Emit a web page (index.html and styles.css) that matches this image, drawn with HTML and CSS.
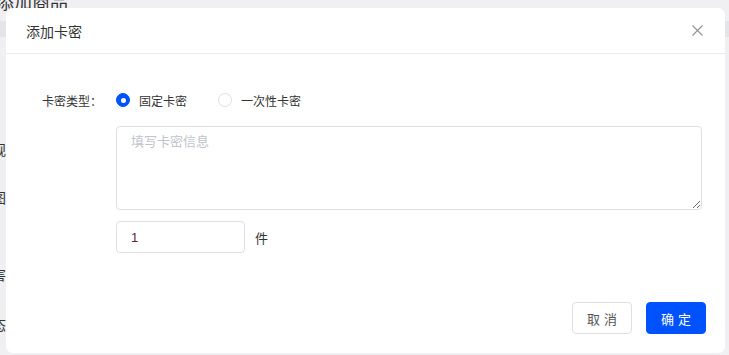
FILE: index.html
```html
<!DOCTYPE html>
<html lang="zh-CN">
<head>
    <meta charset="UTF-8">
    <meta name="viewport" content="width=device-width, initial-scale=1.0">
    <title>添加卡密</title>
    <link rel="stylesheet" href="styles.css">
</head>
<body>
    <div class="page">
        <h2 class="page-title">添加商品</h2>
        <div class="page-bar"></div>
        <div class="page-form">
            <div class="page-label l1">规</div>
            <div class="page-label l2">图</div>
            <div class="page-label l3">害</div>
            <div class="page-label l4">态</div>
        </div>
    </div>

    <div class="modal">
        <div class="modal-header">
            <span class="modal-title">添加卡密</span>
            <button class="modal-close" aria-label="关闭">
                <svg width="11" height="11" viewBox="0 0 11 11">
                    <path d="M0.5 0.5L10.5 10.5M10.5 0.5L0.5 10.5" stroke="#909399" stroke-width="1.1" fill="none"/>
                </svg>
            </button>
        </div>

        <div class="modal-body">
            <div class="form-row">
                <div class="form-label">卡密类型：</div>
                <div class="radio-group">
                    <label class="radio checked"><span class="radio-dot"></span>固定卡密</label>
                    <label class="radio"><span class="radio-dot"></span>一次性卡密</label>
                </div>
            </div>

            <div class="form-field">
                <textarea class="card-text" placeholder="填写卡密信息"></textarea>
            </div>

            <div class="form-field count-row">
                <input class="count-input" type="text" value="1">
                <span class="count-unit">件</span>
            </div>
        </div>

        <div class="modal-footer">
            <button class="btn">取消</button>
            <button class="btn btn-primary">确定</button>
        </div>
    </div>
</body>
</html>
```

FILE: styles.css
```css
body {
    margin: 0;
    background-color: #f0f0f2;
    font-family: "Liberation Sans", "Noto Sans CJK SC", sans-serif;
    color: #333;
    overflow: hidden;
    height: 355px;
}

.page {
    margin-left: -8px;
}

.page-title {
    margin: -9px 0 0 4px;
    font-size: 18px;
    font-weight: normal;
    line-height: 24px;
    color: #333;
}

.page-bar {
    height: 16px;
    margin-top: 6px;
    background-color: #e4e5e9;
}

.page-form {
    position: relative;
}

.page-label {
    position: absolute;
    left: 0;
    font-size: 14px;
    line-height: 16px;
    color: #333;
}

.l1 { top: 105px; }
.l2 { top: 153px; }
.l3 { top: 230px; }
.l4 { top: 280px; }

.modal {
    position: absolute;
    left: 6px;
    top: 8px;
    width: 719px;
    height: 345px;
    background-color: #fff;
    border-radius: 7px;
    display: flex;
    flex-direction: column;
}

.modal-header {
    height: 45px;
    padding: 0 22px 0 20px;
    border-bottom: 1px solid #ebebeb;
    display: flex;
    align-items: center;
    justify-content: space-between;
}

.modal-title {
    font-size: 14px;
    color: #333;
}

.modal-close {
    border: none;
    background: none;
    padding: 0;
    width: 11px;
    height: 11px;
    display: flex;
    cursor: pointer;
}

.modal-body {
    flex: 1;
    padding: 36px 24px 0 36px;
}

.form-row {
    display: flex;
    align-items: center;
    height: 20px;
}

.form-label {
    width: 74px;
    font-size: 12px;
    color: #333;
}

.radio-group {
    display: flex;
    gap: 31px;
}

.radio {
    display: flex;
    align-items: center;
    gap: 9px;
    font-size: 12px;
    color: #333;
    cursor: pointer;
}

.radio-dot {
    width: 12px;
    height: 12px;
    border: 1px solid #dcdfe6;
    border-radius: 50%;
    box-sizing: content-box;
    background-color: #fff;
    display: flex;
    align-items: center;
    justify-content: center;
}

.radio.checked .radio-dot {
    border-color: #0052ff;
    background-color: #0052ff;
}

.radio.checked .radio-dot::after {
    content: "";
    width: 5px;
    height: 5px;
    border-radius: 50%;
    background-color: #fff;
}

.form-field {
    margin-left: 74px;
}

.card-text {
    display: block;
    width: 586px;
    height: 84px;
    margin-top: 16px;
    box-sizing: border-box;
    padding: 6px 14px;
    border: 1px solid #dcdfe6;
    border-radius: 4px;
    font-family: inherit;
    font-size: 13px;
    line-height: 18px;
    color: #333;
    outline: none;
}

.card-text::placeholder {
    color: #c0c4cc;
}

.count-row {
    display: flex;
    align-items: center;
    gap: 10px;
    margin-top: 11px;
}

.count-input {
    width: 129px;
    height: 32px;
    box-sizing: border-box;
    padding: 0 14px;
    border: 1px solid #dcdfe6;
    border-radius: 4px;
    font-family: inherit;
    font-size: 13px;
    color: #5c1f42;
    outline: none;
}

.count-unit {
    font-size: 13px;
    color: #333;
}

.modal-footer {
    display: flex;
    justify-content: flex-end;
    gap: 14px;
    padding: 0 19px 19px 0;
}

.btn {
    width: 60px;
    height: 32px;
    border: 1px solid #dcdfe6;
    border-radius: 4px;
    background-color: #fff;
    color: #555;
    font-family: inherit;
    font-size: 13px;
    letter-spacing: 4px;
    text-indent: 4px;
    cursor: pointer;
}

.btn-primary {
    border-color: #0052ff;
    background-color: #0052ff;
    color: #fff;
}
```
